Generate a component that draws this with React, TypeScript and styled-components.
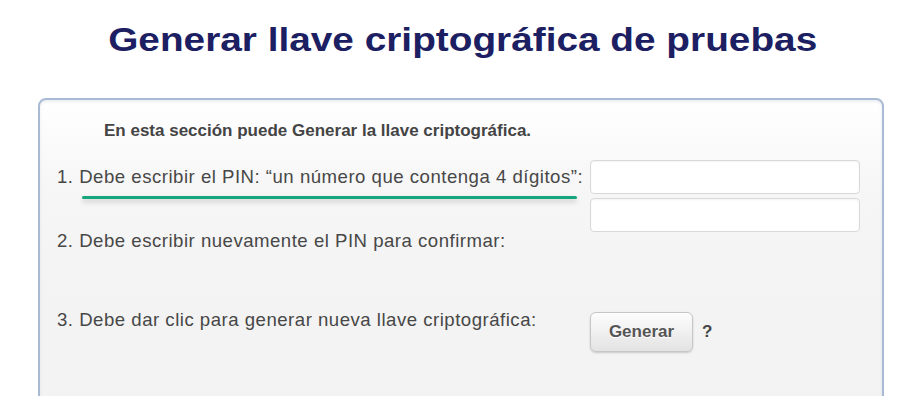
import React from 'react'
import styled, { createGlobalStyle } from 'styled-components'

const GlobalStyle = createGlobalStyle`
  html, body {
    margin: 0;
    padding: 0;
    background: #ffffff;
    font-family: "Liberation Sans", Arial, sans-serif;
  }
`

const Page = styled.div`
  width: 911px;
  height: 420px;
  overflow: hidden;
  background: #fff;
`

const Header = styled.div`
  box-sizing: border-box;
  height: 80px;
  padding: 20px 0 0 15px;
  text-align: center;
`

const Title = styled.h1`
  display: inline-block;
  margin: 0;
  font-size: 33px;
  line-height: 40px;
  font-weight: bold;
  color: #1c2062;
  transform: scaleX(1.175);
`

const Viewport = styled.div`
  margin: 18px 0 0 38px;
  width: 846px;
  height: 298px;
  overflow: hidden;
`

const Panel = styled.div`
  box-sizing: border-box;
  height: 340px;
  border: 2px solid #a9bbd4;
  border-radius: 8px;
  background: linear-gradient(#ffffff 0px, #f6f6f6 90px, #f3f3f3 200px);
  box-shadow: inset 0 2px 3px rgba(120, 140, 170, 0.15);
  padding: 20px 0 0 0;
`

const Intro = styled.p`
  margin: 0 0 18px 64px;
  font-size: 17px;
  line-height: 22px;
  font-weight: 600;
  letter-spacing: 0;
  color: #444;
`

const Row = styled.div<{ $gap?: number }>`
  display: flex;
  align-items: ${({ $gap }) => ($gap === undefined ? 'center' : 'flex-start')};
  margin-top: ${({ $gap }) => $gap ?? 0}px;
`

const Label = styled.div<{ $offset?: number }>`
  position: relative;
  box-sizing: border-box;
  flex: 0 0 550px;
  padding: ${({ $offset }) => $offset ?? 0}px 0 0 17px;
  font-size: 18.6px;
  line-height: 22px;
  letter-spacing: 0.5px;
  color: #474747;
  white-space: nowrap;
`

const Highlight = styled.span`
  position: absolute;
  left: 42px;
  top: 30px;
  width: 495px;
  height: 3px;
  border-radius: 2px;
  background: #16a57c;
  box-shadow: 0 3px 5px rgba(0, 0, 0, 0.18);
`

const Field = styled.input`
  box-sizing: border-box;
  width: 270px;
  height: 34px;
  border: 1px solid #d9d9d9;
  border-radius: 4px;
  background: #fff;
  box-shadow: inset 0 1px 2px rgba(0, 0, 0, 0.05);
  outline: none;
`

const Actions = styled.div<{ $offset?: number }>`
  display: flex;
  align-items: center;
  padding-top: ${({ $offset }) => $offset ?? 0}px;
`

const Button = styled.button`
  box-sizing: border-box;
  width: 103px;
  height: 40px;
  padding: 0;
  border: 1px solid #c6c6c6;
  border-radius: 6px;
  background: linear-gradient(#fdfdfd, #e3e3e3);
  box-shadow: 0 1px 2px rgba(0, 0, 0, 0.18);
  font-family: "Liberation Sans", Arial, sans-serif;
  font-size: 17px;
  font-weight: bold;
  color: #555;
  text-shadow: 0 1px 0 #fff;
  cursor: pointer;
`

const Help = styled.span`
  margin-left: 9px;
  font-size: 17px;
  font-weight: bold;
  color: #444;
`

export default function App() {
  return (
    <Page>
      <GlobalStyle />
      <Header>
        <Title>Generar llave criptográfica de pruebas</Title>
      </Header>
      <Viewport>
        <Panel>
          <Intro>En esta sección puede Generar la llave criptográfica.</Intro>
          <Row>
            <Label>
              1. Debe escribir el PIN: “un número que contenga 4 dígitos”:
              <Highlight />
            </Label>
            <Field type="password" />
          </Row>
          <Row $gap={4}>
            <Label $offset={32}>2. Debe escribir nuevamente el PIN para confirmar:</Label>
            <Field type="password" />
          </Row>
          <Row $gap={57}>
            <Label>3. Debe dar clic para generar nueva llave criptográfica:</Label>
            <Actions $offset={3}>
              <Button>Generar</Button>
              <Help>?</Help>
            </Actions>
          </Row>
        </Panel>
      </Viewport>
    </Page>
  )
}
